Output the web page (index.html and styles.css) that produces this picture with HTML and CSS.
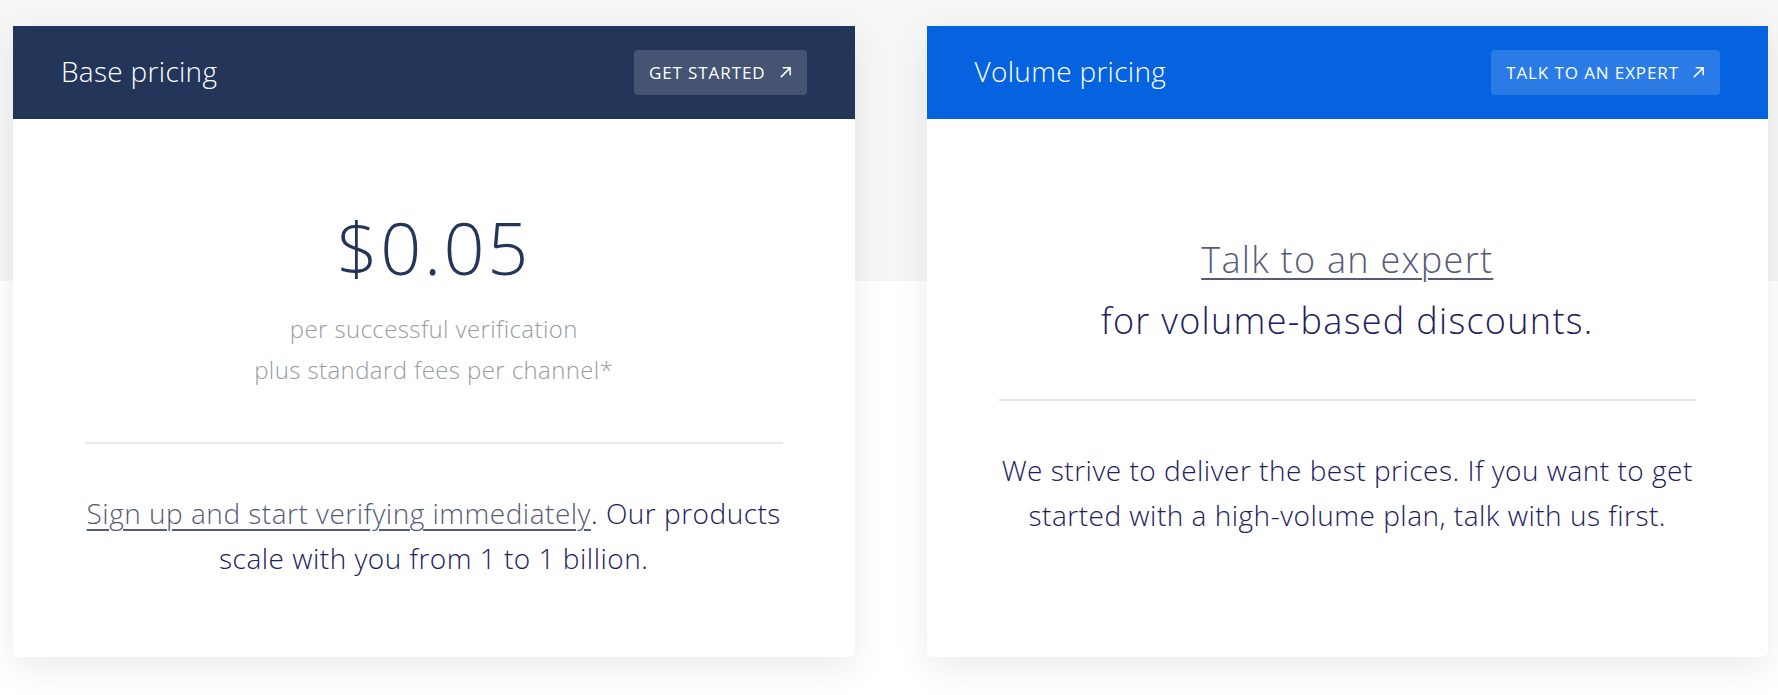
FILE: index.html
```html
<!DOCTYPE html>
<html lang="en">
<head>
<meta charset="utf-8">
<title>Pricing</title>
<link rel="stylesheet" href="styles.css">
</head>
<body>
<div class="page">
  <div class="cards">
    <section class="card">
      <header class="card-head head-navy">
        <h2 class="card-title">Base pricing</h2>
        <a class="head-btn btn-navy" href="#">GET STARTED
          <svg class="arrow" viewBox="0 0 14 14" width="13" height="13"><path d="M2 12 L12 2 M4 2 H12 V10" fill="none" stroke="currentColor" stroke-width="1.6"/></svg>
        </a>
      </header>
      <div class="card-body">
        <div class="top top-base">
          <div class="price">$0.05</div>
          <p class="price-note">per successful verification<br>plus standard fees per channel*</p>
        </div>
        <hr class="rule">
        <p class="desc"><a class="link" href="#">Sign up and start verifying immediately</a>. Our products scale with you from 1 to 1 billion.</p>
      </div>
    </section>
    <section class="card">
      <header class="card-head head-blue">
        <h2 class="card-title">Volume pricing</h2>
        <a class="head-btn btn-blue" href="#">TALK TO AN EXPERT
          <svg class="arrow" viewBox="0 0 14 14" width="13" height="13"><path d="M2 12 L12 2 M4 2 H12 V10" fill="none" stroke="currentColor" stroke-width="1.6"/></svg>
        </a>
      </header>
      <div class="card-body">
        <div class="top top-volume">
          <p class="volume"><a class="link" href="#">Talk to an expert</a><br>for volume-based discounts.</p>
        </div>
        <hr class="rule">
        <p class="desc">We strive to deliver the best prices. If you want to get started with a high-volume plan, talk with us first.</p>
      </div>
    </section>
  </div>
</div>
</body>
</html>
```
FILE: styles.css
```css
* { box-sizing: border-box; }
html, body { margin: 0; padding: 0; }
body {
  font-family: "Open Sans", Lato, "Liberation Sans", sans-serif;
  background: #ffffff;
}
.page {
  height: 695px;
  background: linear-gradient(to bottom, #f6f6f6 0, #f6f6f6 281px, #ffffff 281px);
  padding: 26px 10px 0 13px;
}
.cards {
  display: flex;
  gap: 72px;
  align-items: stretch;
}
.card {
  flex: 1 1 0;
  background: #ffffff;
  border-radius: 0 0 6px 6px;
  overflow: hidden;
  box-shadow: 0 12px 36px rgba(0, 0, 0, 0.08);
  display: flex;
  flex-direction: column;
}
.card-head {
  height: 93px;
  padding: 0 48px;
  display: flex;
  align-items: center;
  justify-content: space-between;
}
.head-navy { background: #233559; }
.head-blue { background: #0563e0; }
.card-title {
  margin: 0 0 4px;
  font-weight: 300;
  font-size: 28px;
  letter-spacing: 0.3px;
  color: #ffffff;
}
.head-btn {
  height: 45px;
  padding: 0 15px 0 15px;
  border-radius: 4px;
  display: flex;
  align-items: center;
  gap: 13px;
  color: #ffffff;
  text-decoration: none;
  font-size: 17px;
  font-weight: 400;
  letter-spacing: 0.9px;
}
.btn-navy { background: #455473; }
.btn-blue { background: #2a7be6; }
.arrow { display: block; }
.card-body {
  flex: 1;
  text-align: center;
  padding: 0 72px 76px;
}
.top-base { padding-top: 85px; }
.top-volume { padding-top: 110px; }
.price {
  font-size: 72px;
  line-height: 86px;
  font-weight: 300;
  letter-spacing: 2.5px;
  color: #233559;
}
.price-note {
  margin: 18px 0 0;
  font-size: 24px;
  line-height: 41px;
  font-weight: 300;
  letter-spacing: 0.4px;
  color: #979ba3;
}
.volume {
  margin: 0;
  font-size: 36px;
  line-height: 61px;
  font-weight: 300;
  letter-spacing: 1.3px;
  color: #1b205e;
}
.top-base + .rule { margin-top: 52px; }
.rule {
  margin: 48px 0 0;
  border: 0;
  border-top: 2px solid #e8e8ea;
  height: 0;
}
.desc {
  margin: 47px -12px 0;
  font-size: 28px;
  line-height: 45px;
  font-weight: 300;
  letter-spacing: 0.5px;
  color: #1b205e;
}
.link {
  color: #565b76;
  text-decoration: underline;
  text-decoration-thickness: 2px;
  text-underline-offset: 5px;
}
```
